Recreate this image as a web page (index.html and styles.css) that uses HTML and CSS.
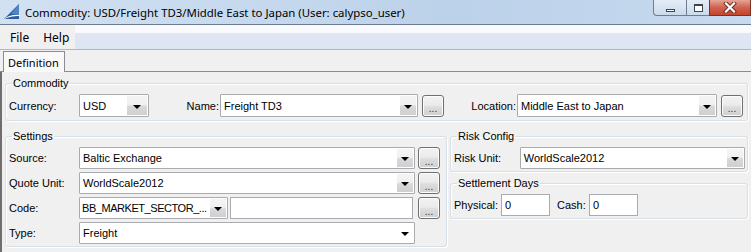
FILE: index.html
```html
<!DOCTYPE html>
<html lang="en">
<head>
  <meta charset="UTF-8" />
  <title>Commodity</title>
  <link rel="stylesheet" href="styles.css">
</head>
<body>
  <div class="window">
    <div class="titlebar">
      <svg class="app-icon" width="18" height="18" viewBox="0 0 18 18">
        <path d="M16 1 L16 16 L1 16 Z" fill="#2a5c9e"/>
        <path d="M16 1 L16 11 L8 11 Z" fill="#4f86c6"/>
        <path d="M1 16 C6 12 11 11.5 17 12 L17 13 C11 12.8 6 13.6 1 16 Z" fill="#ffffff"/>
      </svg>
      <span class="title">Commodity: USD/Freight TD3/Middle East to Japan (User: calypso_user)</span>
      <div class="win-buttons">
        <span class="wb wb-min"><i></i></span>
        <span class="wb wb-max"><i></i></span>
        <span class="wb wb-close">
          <svg width="14" height="11" viewBox="0 0 14 11">
            <path d="M3 1.5 L11 9.5 M11 1.5 L3 9.5" stroke="#6b2a20" stroke-width="4" stroke-linecap="square"/>
            <path d="M3 1.5 L11 9.5 M11 1.5 L3 9.5" stroke="#ffffff" stroke-width="2.2" stroke-linecap="square"/>
          </svg>
        </span>
      </div>
    </div>

    <div class="menubar">
      <div class="menus"><span>File</span><span>Help</span></div>
    </div>

    <div class="tabs"><span class="tab">Definition</span></div>

    <div class="content">
      <fieldset class="group commodity">
        <legend>Commodity</legend>
        <div class="row">
          <span class="label w71">Currency:</span>
          <div class="combo w70"><span class="value">USD</span><span class="arrow wide"></span></div>
          <span class="label right w71">Name:</span>
          <div class="combo w198"><span class="value">Freight TD3</span><span class="arrow"></span></div>
          <button class="dots">...</button>
          <span class="label right w73">Location:</span>
          <div class="combo w200"><span class="value">Middle East to Japan</span><span class="arrow"></span></div>
          <button class="dots">...</button>
        </div>
      </fieldset>

      <div class="lower">
        <fieldset class="group settings">
          <legend>Settings</legend>
          <div class="rows">
            <div class="row">
              <span class="label w71">Source:</span>
              <div class="combo w336"><span class="value">Baltic Exchange</span><span class="arrow"></span></div>
              <button class="dots">...</button>
            </div>
            <div class="row">
              <span class="label w71">Quote Unit:</span>
              <div class="combo w336"><span class="value">WorldScale2012</span><span class="arrow"></span></div>
              <button class="dots">...</button>
            </div>
            <div class="row">
              <span class="label w71">Code:</span>
              <div class="combo w149"><span class="value tight">BB_MARKET_SECTOR_...</span><span class="arrow"></span></div>
              <input class="field w183" type="text" value="">
              <button class="dots gap5">...</button>
            </div>
            <div class="row">
              <span class="label w71">Type:</span>
              <div class="combo w336 plain"><span class="value">Freight</span><span class="arrow"></span></div>
            </div>
          </div>
        </fieldset>

        <div class="side">
          <fieldset class="group">
            <legend>Risk Config</legend>
            <div class="row">
              <span class="label w67">Risk Unit:</span>
              <div class="combo w226"><span class="value">WorldScale2012</span><span class="arrow"></span></div>
            </div>
          </fieldset>
          <fieldset class="group">
            <legend>Settlement Days</legend>
            <div class="row">
              <span class="label w48">Physical:</span>
              <input class="field w49" type="text" value="0">
              <span class="label cash">Cash:</span>
              <input class="field w49" type="text" value="0">
            </div>
          </fieldset>
        </div>
      </div>
    </div>
  </div>
</body>
</html>
```

FILE: styles.css
```css
* {
  box-sizing: border-box;
}

body {
  margin: 0;
  font-family: "Liberation Sans", Arial, sans-serif;
  font-size: 11px;
  color: #000;
  background: #f0f0f0;
}

.window {
  width: 751px;
  height: 252px;
  overflow: hidden;
  display: flex;
  flex-direction: column;
}

/* title bar */
.titlebar {
  height: 25px;
  display: flex;
  align-items: center;
  background: linear-gradient(to right, #d2e1f2, #bcd2ea 60%, #c6d9ee);
  border-bottom: 1px solid #6c7b8e;
}

.app-icon {
  margin: 0 4px 0 3px;
}

.title {
  font-family: "Noto Sans", "Open Sans", sans-serif;
  font-size: 11.4px;
  color: #000;
  white-space: nowrap;
}

.win-buttons {
  margin-left: auto;
  align-self: flex-start;
  display: flex;
  height: 16px;
}

.wb {
  height: 16px;
  display: flex;
  align-items: center;
  justify-content: center;
  border: 1px solid #6f7d8f;
  border-top: none;
  background: linear-gradient(#e4edf7, #cbdaeb);
}

.wb-min {
  width: 33px;
  border-radius: 0 0 0 4px;
  border-right: none;
}

.wb-min i {
  width: 9px;
  height: 3px;
  border: 1px solid #3c4652;
  background: #fff;
  margin-top: 5px;
}

.wb-max {
  width: 23px;
  border-right: none;
}

.wb-max i {
  width: 9px;
  height: 8px;
  border: 1px solid #3c4652;
  border-top-width: 2px;
  background: #fff;
}

.wb-close {
  width: 42px;
  border-color: #7a3024;
  background: linear-gradient(#e6a496, #d0624e 50%, #c5432d);
}

/* menu bar */
.menubar {
  height: 25px;
  background: linear-gradient(#f8fafd 0, #f8fafd 8px, #e0e6f4 8px, #dde4f2 100%);
  border-bottom: 1px solid #b3b6bc;
}

.menus {
  width: 75px;
  height: 24px;
  display: flex;
  align-items: center;
  gap: 14px;
  padding-left: 10px;
  background: #f0f0f0;
  font-family: "Noto Sans", "Open Sans", sans-serif;
  font-size: 12px;
}

/* tabs */
.tabs {
  height: 22px;
  display: flex;
  align-items: flex-end;
  border-bottom: 1px solid #898c95;
  background: #f0f0f0;
}

.tab {
  height: 21px;
  margin: 0 0 -1px 3px;
  padding: 4px 5px 0 4px;
  border: 1px solid #898c95;
  border-bottom: none;
  background: #f9f9f9;
  font-family: "Noto Sans", "Open Sans", sans-serif;
  font-size: 11px;
  line-height: 14px;
}

/* content */
.content {
  flex: 1;
  border-left: 2px solid #6e6e6e;
  background: #f0f0f0;
}

.group {
  margin: 0;
  border: 1px solid #d5dfe5;
  border-radius: 3px;
  box-shadow: inset 1px 1px 0 #fff, 1px 1px 0 #fff;
  padding: 5px 2px 2px 2px;
  min-width: 0;
}

.group legend {
  padding: 0 1px;
  margin-left: 4px;
  line-height: 12px;
}

.commodity {
  margin: 5px 3px 0 3px;
  padding-bottom: 3px;
}

.lower {
  display: flex;
  gap: 3px;
  margin: 9px 3px 0 3px;
}

.settings {
  width: 442px;
}

.side {
  width: 298px;
  display: flex;
  flex-direction: column;
  gap: 5px;
}

.rows {
  display: flex;
  flex-direction: column;
  gap: 3px;
}

.row {
  display: flex;
  align-items: center;
  height: 22px;
}

.commodity .row {
  height: 23px;
}

.label {
  padding-left: 1px;
  white-space: nowrap;
}

.label.right {
  text-align: right;
  padding-right: 1px;
}

.cash {
  margin-left: 6px;
  width: 33px;
}

.w48 { width: 48px; }
.w49 { width: 49px; }
.w67 { width: 67px; }
.w70 { width: 70px; }
.w71 { width: 71px; }
.w73 { width: 73px; }
.w149 { width: 149px; }
.w183 { width: 183px; }
.w198 { width: 198px; }
.w200 { width: 200px; }
.w226 { width: 226px; }
.w336 { width: 336px; }

/* combo boxes */
.combo {
  height: 100%;
  display: flex;
  border: 1px solid #a9abaf;
  border-radius: 1px;
  background: #fff;
}

.combo .value {
  flex: 1;
  display: flex;
  align-items: center;
  padding-left: 3px;
  overflow: hidden;
  white-space: nowrap;
}

.combo .value.tight {
  padding-left: 2px;
  letter-spacing: -0.45px;
}

.combo .arrow {
  width: 18px;
  display: flex;
  align-items: center;
  justify-content: center;
  background: linear-gradient(#f4f4f4, #f0f0f0 45%, #d9d9d9 55%, #cfcfcf);
  border: 1px solid #fff;
}

.combo .arrow.wide {
  width: 22px;
}

.combo .arrow::after {
  content: "";
  border-left: 4px solid transparent;
  border-right: 4px solid transparent;
  border-top: 4px solid #000;
  margin-top: 2px;
}

.combo.plain .arrow {
  background: #fff;
}

.field {
  height: 22px;
  margin: 0 0 0 2px;
  padding: 0 0 0 3px;
  border: 1px solid #a9abaf;
  background: #fff;
  font: inherit;
}

.w49.field {
  margin-left: 0;
}

.dots {
  width: 22px;
  height: 22px;
  margin-left: 4px;
  padding: 6px 0 0;
  border: 1px solid #707070;
  border-radius: 3px;
  background: linear-gradient(#f2f2f2, #ebebeb 45%, #dddddd 55%, #cfcfcf);
  box-shadow: inset 0 0 0 1px #fcfcfc;
  font: inherit;
  font-size: 10px;
  color: #333;
  letter-spacing: 0;
}

.settings .dots {
  margin-left: 3px;
}

.settings .dots.gap5 {
  margin-left: 5px;
}
```
